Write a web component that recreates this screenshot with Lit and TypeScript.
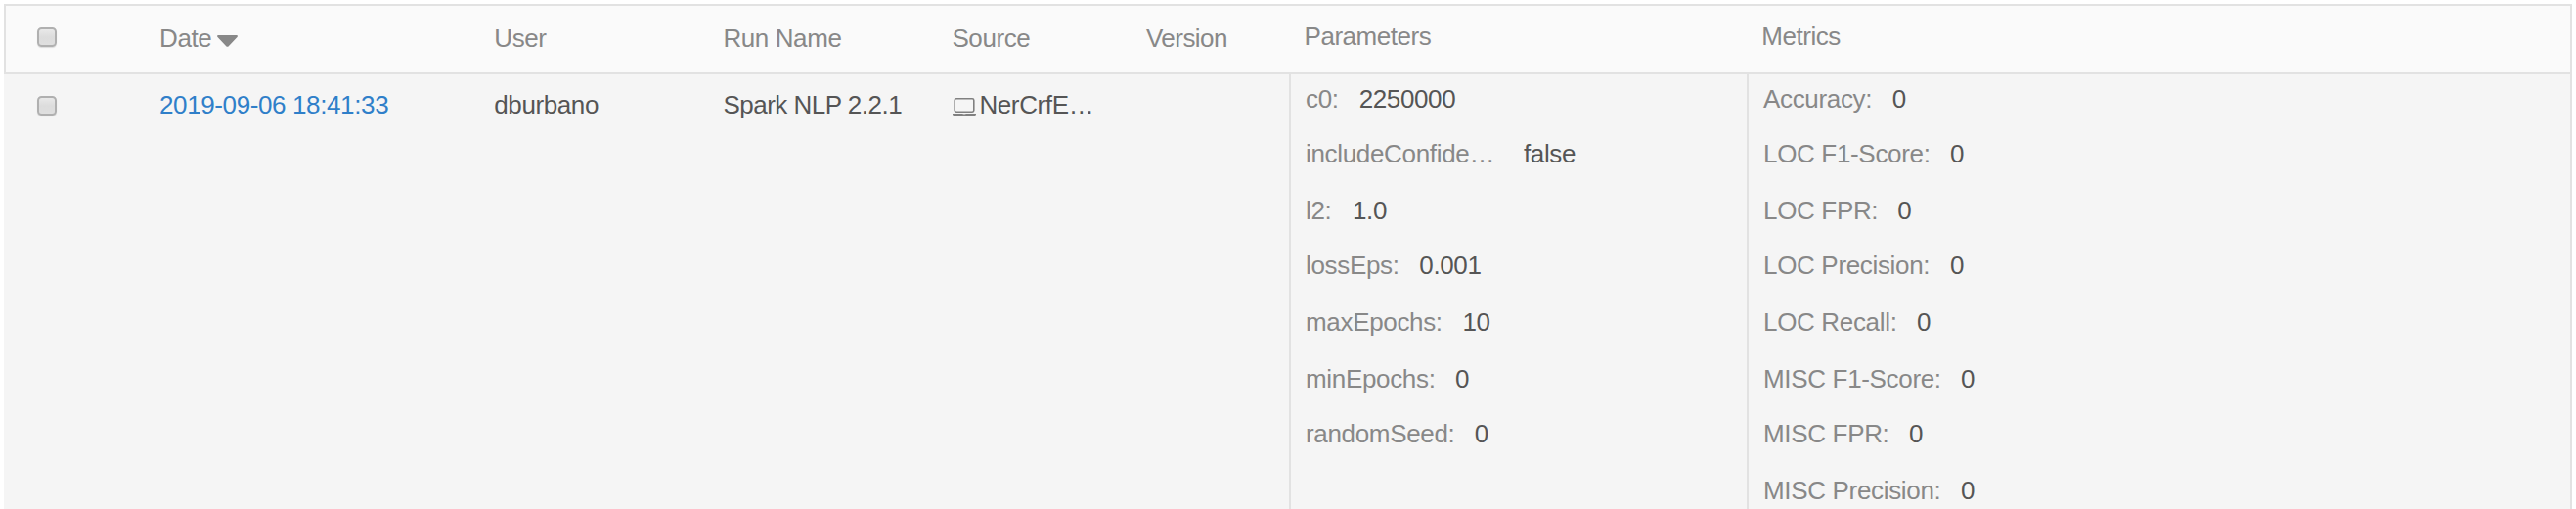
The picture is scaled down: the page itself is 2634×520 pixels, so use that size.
import { LitElement, html, css, svg } from "lit";
import { customElement } from "lit/decorators.js";

type Entry = { name: string; value: string; offset: number };

const PARAMS: Entry[] = [
  { name: "c0:", value: "2250000", offset: 54.7 },
  { name: "includeConfide…", value: "false", offset: 223 },
  { name: "l2:", value: "1.0", offset: 48 },
  { name: "lossEps:", value: "0.001", offset: 116.3 },
  { name: "maxEpochs:", value: "10", offset: 160.5 },
  { name: "minEpochs:", value: "0", offset: 153 },
  { name: "randomSeed:", value: "0", offset: 172.7 },
];

const METRICS: Entry[] = [
  { name: "Accuracy:", value: "0", offset: 131.7 },
  { name: "LOC F1-Score:", value: "0", offset: 191 },
  { name: "LOC FPR:", value: "0", offset: 137.3 },
  { name: "LOC Precision:", value: "0", offset: 191 },
  { name: "LOC Recall:", value: "0", offset: 157 },
  { name: "MISC F1-Score:", value: "0", offset: 202 },
  { name: "MISC FPR:", value: "0", offset: 149 },
  { name: "MISC Precision:", value: "0", offset: 202 },
];

const laptop = svg`<svg class="laptop" viewBox="0 0 24 20" width="24" height="20">
  <rect x="2.2" y="1.800" width="19.6" height="13.4" rx="1.6" fill="none" stroke="#808080" stroke-width="1.600"/>
  <path d="M0 17h24v.8c0 .9-.9 1.400-2 1.400H2c-1.100 0-2-.5-2-1.400z" fill="#808080"/>
  <path d="M10.600 17.600h2.800" stroke="#ccc" stroke-width=".7"/>
</svg>`;

@customElement("runs-entries")
class RunsEntries extends LitElement {
  static properties = { entries: { attribute: false } };
  declare entries: Entry[];
  static styles = css`
    .list {
      display: grid;
      grid-template-rows: 56px 58px 56px 58px 58px 56px 58px 56px;
    }
    .entry { display: flex; line-height: 50px; white-space: nowrap; }
    .name { color: #888; letter-spacing: -0.33px; flex: none; }
    .value { color: #555; letter-spacing: -0.38px; }
  `;
  render() {
    return html`<div class="list">
      ${this.entries.map(
        (e) => html`<div class="entry">
          <span class="name" style="width:${e.offset}px">${e.name}</span><span class="value">${e.value}</span>
        </div>`
      )}
    </div>`;
  }
}

@customElement("app-root")
class AppRoot extends LitElement {
  static styles = css`
    :host {
      display: block;
      height: 520px;
      overflow: hidden;
      box-sizing: border-box;
      padding: 4px 4px 0;
      background: #fff;
      font: 26px "Liberation Sans", Arial, sans-serif;
      letter-spacing: -0.4px;
      white-space: nowrap;
      color: #555;
    }
    .head, .row {
      display: grid;
      box-sizing: border-box;
      border-right: 2px solid #e2e2e2;
    }
    .head {
      grid-template-columns: 140px 343px 234px 234px 198px 163px 468px 1fr;
      height: 72px;
      border: 2px solid #e2e2e2;
      background: #fafafa;
      color: #888;
      line-height: 66px;
    }
    .row {
      grid-template-columns: 142px 343px 234px 234px 198px 163px 468px 1fr;
      height: 444px;
      background: #f5f5f5;
      line-height: 62px;
    }
    .check { padding: 22px 0 0 34px; line-height: 0; }
    .head .check { padding-left: 32px; }
    .box {
      display: block;
      width: 20px;
      height: 20px;
      box-sizing: border-box;
      border: 2px solid #b0b0b0;
      border-radius: 4.5px;
      background: linear-gradient(#e9e9e9, #dcdcdc 50%, #dfdfdf);
      box-shadow: 0 1px 1px rgba(0, 0, 0, 0.12);
    }
    .date { padding-left: 17px; }
    .sort { margin-left: 6px; vertical-align: 0; }
    .user { padding-left: 16.3px; }
    .run { padding-left: 16.4px; }
    .source { padding-left: 16.4px; }
    .version { padding-left: 17px; letter-spacing: -0.54px; }
    .tall { line-height: 62px; letter-spacing: -0.45px; }
    .head .params { padding-left: 15.5px; }
    .head .metrics { padding-left: 15.2px; }
    .row .params, .row .metrics { border-left: 2px solid #e2e2e2; padding-left: 15px; }
    .link { color: #2f7fc9; letter-spacing: -0.38px; }
    .row .run { letter-spacing: -0.5px; }
    .row .source { display: flex; letter-spacing: -0.38px; }
    .laptop { margin: 23px 3px 0 1px; flex: none; }
  `;
  render() {
    return html`
      <div class="head">
        <div class="check"><span class="box"></span></div>
        <div class="date">Date<svg class="sort" width="21" height="12" viewBox="0 0 20 12" preserveAspectRatio="none"><path d="M1.200 0h17.600c1.100 0 1.500 1.200.7 2l-8.300 9.200c-.7.7-1.700.7-2.400 0L.5 2C-.3 1.200.1 0 1.200 0z" fill="#888"/></svg></div>
        <div class="user">User</div>
        <div class="run">Run Name</div>
        <div class="source">Source</div>
        <div class="version">Version</div>
        <div class="params tall">Parameters</div>
        <div class="metrics tall">Metrics</div>
      </div>
      <div class="row">
        <div class="check"><span class="box"></span></div>
        <div class="date"><a class="link">2019-09-06 18:41:33</a></div>
        <div class="user">dburbano</div>
        <div class="run">Spark NLP 2.2.1</div>
        <div class="source">${laptop}<span>NerCrfE…</span></div>
        <div class="version"></div>
        <div class="params"><runs-entries .entries=${PARAMS}></runs-entries></div>
        <div class="metrics"><runs-entries .entries=${METRICS}></runs-entries></div>
      </div>
    `;
  }
}
